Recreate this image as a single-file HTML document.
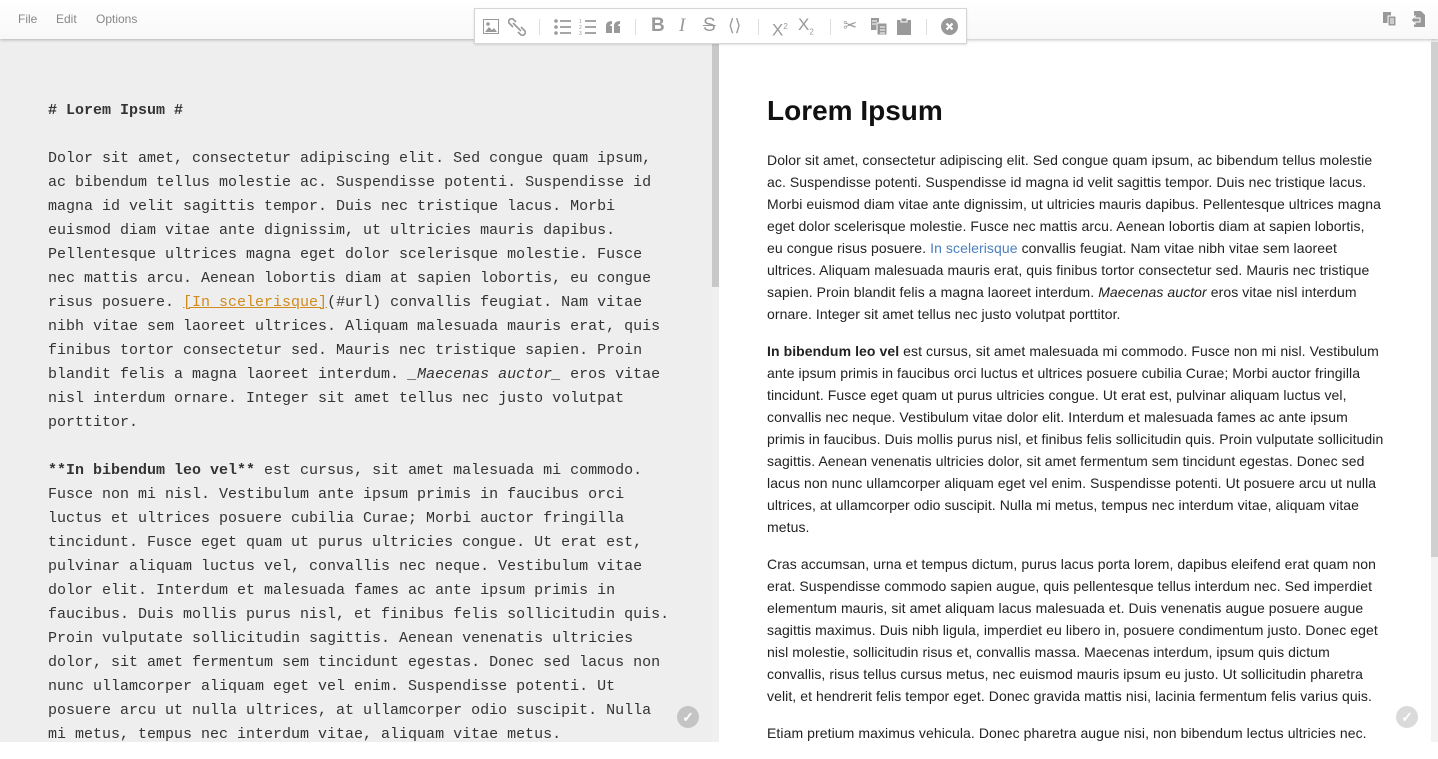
<!DOCTYPE html>
<html><head><meta charset="utf-8"><style>
*{margin:0;padding:0;box-sizing:border-box}
body{width:1438px;height:742px;overflow:hidden;background:#fff;position:relative;font-family:"Liberation Sans",Arial,sans-serif}
.menubar{position:absolute;left:0;top:0;width:1438px;height:39px;background:linear-gradient(#fff,#f8f8f8);box-shadow:0 1px 3px rgba(0,0,0,.25);z-index:5}
.menubar span{position:absolute;top:12px;font-size:12px;color:#888}
.left{position:absolute;left:0;top:39px;width:712px;height:703px;background:#eee}
.lsb{position:absolute;left:712px;top:39px;width:7px;height:703px;background:#f0f0f0}
.lsb div{position:absolute;left:0;top:4px;width:7px;height:244px;background:#c8c8c8}
.rsb{position:absolute;left:1431px;top:39px;width:7px;height:703px;background:#f3f3f3}
.rsb div{position:absolute;left:0;top:3px;width:7px;height:515px;background:#d0d0d0}
.mono{position:absolute;left:48px;top:99px;font-family:"Liberation Mono",monospace;font-size:15px;line-height:24px;color:#333;white-space:pre}
.mono a{color:#d08a1d;text-decoration:underline}
.right{position:absolute;left:767px;top:92px;font-size:14px;line-height:22px;color:#222;white-space:nowrap;letter-spacing:0.08px}
.right h1{font-size:28px;line-height:38px;font-weight:bold;color:#111;margin-bottom:19px;letter-spacing:0}
.right p{margin-bottom:15px}
.right a{color:#4a7fc1;text-decoration:none}
.tb{position:absolute;left:474px;top:8px;width:493px;height:36px;background:#fff;border:1px solid #d5d5d5;box-shadow:0 1px 2px rgba(0,0,0,.12);z-index:6}
.ic{position:absolute;top:9px;color:#999;font-size:16px;line-height:18px}
.sep{position:absolute;top:10px;width:1px;height:16px;background:#ddd}
.chk{position:absolute;width:22px;height:22px;border-radius:50%;background:#c4c4c4;color:#fff;font-size:14px;text-align:center;line-height:22px;font-weight:bold}
</style></head><body>
<div class="menubar"><span style="left:18px">File</span><span style="left:56px">Edit</span><span style="left:96px">Options</span>
<svg style="position:absolute;left:1382px;top:11px" width="16" height="16" viewBox="0 0 16 16"><rect x="1" y="1" width="8" height="11" fill="#999"/><rect x="6" y="5" width="8" height="10" fill="#999" stroke="#fff" stroke-width="1"/><path d="M8 8h4M8 10h4M8 12h4" stroke="#fff"/></svg>
<svg style="position:absolute;left:1410px;top:10px" width="16" height="18" viewBox="0 0 16 18"><path d="M4 1h7l4 4v12H4z" fill="#999"/><path d="M1 10l4-4v2h5v4H5v2z" fill="#999" stroke="#fff"/></svg>
</div>
<div class="tb">
<svg class="ic" style="left:8px;top:10px" width="16" height="15" viewBox="0 0 16 15"><rect x="0.5" y="0.5" width="15" height="14" fill="none" stroke="#999"/><path d="M2 13l4-5 3 3 2-2 3 4z" fill="#999"/><circle cx="5" cy="5" r="1.8" fill="#999"/></svg>
<svg class="ic" style="left:33px" width="18" height="18" viewBox="0 0 18 18"><path d="M8 4l-3-3a3 3 0 0 0-4 4l4 4M10 14l3 3a3 3 0 0 0 4-4l-4-4M5 5l8 8" fill="none" stroke="#999" stroke-width="1.6"/></svg>
<div class="sep" style="left:64px"></div>
<svg class="ic" style="left:79px" width="17" height="17" viewBox="0 0 17 17"><circle cx="2" cy="3" r="1.8" fill="#999"/><circle cx="2" cy="9" r="1.8" fill="#999"/><circle cx="2" cy="15" r="1.8" fill="#999"/><path d="M6 3h11M6 9h11M6 15h11" stroke="#999" stroke-width="1.8"/></svg>
<svg class="ic" style="left:104px" width="17" height="17" viewBox="0 0 17 17"><text x="0" y="5" font-size="5" fill="#999" font-family="Liberation Sans">1</text><text x="0" y="11" font-size="5" fill="#999" font-family="Liberation Sans">2</text><text x="0" y="17" font-size="5" fill="#999" font-family="Liberation Sans">3</text><path d="M6 3h11M6 9h11M6 15h11" stroke="#999" stroke-width="1.8"/></svg>
<svg class="ic" style="left:130px;top:11px" width="16" height="14" viewBox="0 0 16 14"><path d="M1 13V6q0-5 6-5v3q-2 0-2 2h2v7zM9 13V6q0-5 6-5v3q-2 0-2 2h2v7z" fill="#999"/></svg>
<div class="sep" style="left:160px"></div>
<div class="ic" style="left:176px;font-weight:bold;font-size:19px;top:8px">B</div>
<div class="ic" style="left:204px;font-style:italic;font-size:19px;top:8px;font-family:'Liberation Serif',serif">I</div>
<div class="ic" style="left:228px;font-size:19px;top:8px;text-decoration:line-through">S</div>
<div class="ic" style="left:253px;font-size:17px;top:8px">&#10216;&#10217;</div>
<div class="sep" style="left:283px"></div>
<div class="ic" style="left:297px;font-size:17px;top:9px">X<sup style="font-size:8px">2</sup></div>
<div class="ic" style="left:323px;font-size:17px;top:7px">X<sub style="font-size:8px">2</sub></div>
<div class="sep" style="left:355px"></div>
<div class="ic" style="left:368px;font-size:17px;top:8px">&#9986;</div>
<svg class="ic" style="left:396px" width="16" height="17" viewBox="0 0 16 17"><rect x="0" y="0" width="8" height="12" fill="#999"/><rect x="6" y="5" width="10" height="12" fill="#999" stroke="#fff"/><path d="M1 3h5M1 6h4M9 9h5M9 12h5M9 15h5" stroke="#fff"/></svg>
<svg class="ic" style="left:421px" width="16" height="17" viewBox="0 0 16 17"><rect x="1" y="2" width="14" height="15" fill="#999"/><rect x="5" y="0" width="6" height="4" fill="#999" stroke="#fff"/></svg>
<div class="sep" style="left:451px"></div>
<svg class="ic" style="left:466px" width="17" height="17" viewBox="0 0 17 17"><circle cx="8.5" cy="8.5" r="8.5" fill="#999"/><path d="M5.5 5.5l6 6M11.5 5.5l-6 6" stroke="#fff" stroke-width="2.2"/></svg>
</div>
<div class="left"></div>
<div class="lsb"><div></div></div>
<div class="rsb"><div></div></div>
<div class="mono"><b># Lorem Ipsum #</b>

Dolor sit amet, consectetur adipiscing elit. Sed congue quam ipsum,
ac bibendum tellus molestie ac. Suspendisse potenti. Suspendisse id
magna id velit sagittis tempor. Duis nec tristique lacus. Morbi
euismod diam vitae ante dignissim, ut ultricies mauris dapibus.
Pellentesque ultrices magna eget dolor scelerisque molestie. Fusce
nec mattis arcu. Aenean lobortis diam at sapien lobortis, eu congue
risus posuere. <a>[In scelerisque]</a>(#url) convallis feugiat. Nam vitae
nibh vitae sem laoreet ultrices. Aliquam malesuada mauris erat, quis
finibus tortor consectetur sed. Mauris nec tristique sapien. Proin
blandit felis a magna laoreet interdum. <i>_Maecenas auctor_</i> eros vitae
nisl interdum ornare. Integer sit amet tellus nec justo volutpat
porttitor.

<b>**In bibendum leo vel**</b> est cursus, sit amet malesuada mi commodo.
Fusce non mi nisl. Vestibulum ante ipsum primis in faucibus orci
luctus et ultrices posuere cubilia Curae; Morbi auctor fringilla
tincidunt. Fusce eget quam ut purus ultricies congue. Ut erat est,
pulvinar aliquam luctus vel, convallis nec neque. Vestibulum vitae
dolor elit. Interdum et malesuada fames ac ante ipsum primis in
faucibus. Duis mollis purus nisl, et finibus felis sollicitudin quis.
Proin vulputate sollicitudin sagittis. Aenean venenatis ultricies
dolor, sit amet fermentum sem tincidunt egestas. Donec sed lacus non
nunc ullamcorper aliquam eget vel enim. Suspendisse potenti. Ut
posuere arcu ut nulla ultrices, at ullamcorper odio suscipit. Nulla
mi metus, tempus nec interdum vitae, aliquam vitae metus.</div>
<div class="right">
<h1>Lorem Ipsum</h1>
<p>Dolor sit amet, consectetur adipiscing elit. Sed congue quam ipsum, ac bibendum tellus molestie<br>ac. Suspendisse potenti. Suspendisse id magna id velit sagittis tempor. Duis nec tristique lacus.<br>Morbi euismod diam vitae ante dignissim, ut ultricies mauris dapibus. Pellentesque ultrices magna<br>eget dolor scelerisque molestie. Fusce nec mattis arcu. Aenean lobortis diam at sapien lobortis,<br>eu congue risus posuere. <a>In scelerisque</a> convallis feugiat. Nam vitae nibh vitae sem laoreet<br>ultrices. Aliquam malesuada mauris erat, quis finibus tortor consectetur sed. Mauris nec tristique<br>sapien. Proin blandit felis a magna laoreet interdum. <i>Maecenas auctor</i> eros vitae nisl interdum<br>ornare. Integer sit amet tellus nec justo volutpat porttitor.</p>
<p><b>In bibendum leo vel</b> est cursus, sit amet malesuada mi commodo. Fusce non mi nisl. Vestibulum<br>ante ipsum primis in faucibus orci luctus et ultrices posuere cubilia Curae; Morbi auctor fringilla<br>tincidunt. Fusce eget quam ut purus ultricies congue. Ut erat est, pulvinar aliquam luctus vel,<br>convallis nec neque. Vestibulum vitae dolor elit. Interdum et malesuada fames ac ante ipsum<br>primis in faucibus. Duis mollis purus nisl, et finibus felis sollicitudin quis. Proin vulputate sollicitudin<br>sagittis. Aenean venenatis ultricies dolor, sit amet fermentum sem tincidunt egestas. Donec sed<br>lacus non nunc ullamcorper aliquam eget vel enim. Suspendisse potenti. Ut posuere arcu ut nulla<br>ultrices, at ullamcorper odio suscipit. Nulla mi metus, tempus nec interdum vitae, aliquam vitae<br>metus.</p>
<p>Cras accumsan, urna et tempus dictum, purus lacus porta lorem, dapibus eleifend erat quam non<br>erat. Suspendisse commodo sapien augue, quis pellentesque tellus interdum nec. Sed imperdiet<br>elementum mauris, sit amet aliquam lacus malesuada et. Duis venenatis augue posuere augue<br>sagittis maximus. Duis nibh ligula, imperdiet eu libero in, posuere condimentum justo. Donec eget<br>nisl molestie, sollicitudin risus et, convallis massa. Maecenas interdum, ipsum quis dictum<br>convallis, risus tellus cursus metus, nec euismod mauris ipsum eu justo. Ut sollicitudin pharetra<br>velit, et hendrerit felis tempor eget. Donec gravida mattis nisi, lacinia fermentum felis varius quis.</p>
<p>Etiam pretium maximus vehicula. Donec pharetra augue nisi, non bibendum lectus ultricies nec.</p>
</div>
<div class="chk" style="left:677px;top:706px">&#10003;</div>
<div class="chk" style="left:1396px;top:706px;background:#dadada">&#10003;</div>
</body></html>
